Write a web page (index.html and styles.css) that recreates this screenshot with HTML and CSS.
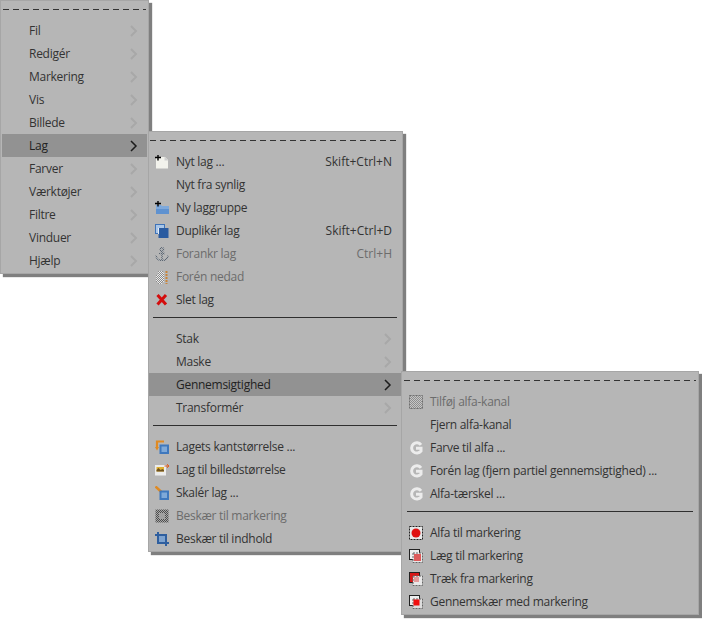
FILE: index.html
```html
<!DOCTYPE html>
<html lang="da">
<head>
<meta charset="utf-8">
<title>Lag-menu</title>
<link rel="stylesheet" href="styles.css">
</head>
<body>
<svg class="defs" width="0" height="0" aria-hidden="true">
  <defs>
    <pattern id="check" width="2" height="2" patternUnits="userSpaceOnUse"><rect width="2" height="2" fill="#ececec"/><rect width="1" height="1" fill="#8a8a8a"/><rect x="1" y="1" width="1" height="1" fill="#8a8a8a"/></pattern>
    <pattern id="checkmid" width="2" height="2" patternUnits="userSpaceOnUse"><rect width="2" height="2" fill="#c6c6c6"/><rect width="1" height="1" fill="#8e8e8e"/><rect x="1" y="1" width="1" height="1" fill="#8e8e8e"/></pattern>
    <pattern id="checkdark" width="2" height="2" patternUnits="userSpaceOnUse"><rect width="2" height="2" fill="#a8a8a8"/><rect width="1" height="1" fill="#4c4c4c"/><rect x="1" y="1" width="1" height="1" fill="#4c4c4c"/></pattern>
    <pattern id="checkblue" width="2" height="2" patternUnits="userSpaceOnUse"><rect width="2" height="2" fill="#a9aeb4"/><rect width="1" height="1" fill="#5d6670"/><rect x="1" y="1" width="1" height="1" fill="#5d6670"/></pattern>
  </defs>
</svg>
<div class="menu menu-main">
  <div class="tearoff"></div>
  <div class="item"><span class="icon"></span><span class="label">Fil</span><svg class="arrow" viewBox="0 0 8 12"><path d="M1 1l5 5-5 5"/></svg></div>
  <div class="item"><span class="icon"></span><span class="label">Redigér</span><svg class="arrow" viewBox="0 0 8 12"><path d="M1 1l5 5-5 5"/></svg></div>
  <div class="item"><span class="icon"></span><span class="label">Markering</span><svg class="arrow" viewBox="0 0 8 12"><path d="M1 1l5 5-5 5"/></svg></div>
  <div class="item"><span class="icon"></span><span class="label">Vis</span><svg class="arrow" viewBox="0 0 8 12"><path d="M1 1l5 5-5 5"/></svg></div>
  <div class="item"><span class="icon"></span><span class="label">Billede</span><svg class="arrow" viewBox="0 0 8 12"><path d="M1 1l5 5-5 5"/></svg></div>
  <div class="item active"><span class="icon"></span><span class="label">Lag</span><svg class="arrow" viewBox="0 0 8 12"><path d="M1 1l5 5-5 5"/></svg></div>
  <div class="item"><span class="icon"></span><span class="label">Farver</span><svg class="arrow" viewBox="0 0 8 12"><path d="M1 1l5 5-5 5"/></svg></div>
  <div class="item"><span class="icon"></span><span class="label">Værktøjer</span><svg class="arrow" viewBox="0 0 8 12"><path d="M1 1l5 5-5 5"/></svg></div>
  <div class="item"><span class="icon"></span><span class="label">Filtre</span><svg class="arrow" viewBox="0 0 8 12"><path d="M1 1l5 5-5 5"/></svg></div>
  <div class="item"><span class="icon"></span><span class="label">Vinduer</span><svg class="arrow" viewBox="0 0 8 12"><path d="M1 1l5 5-5 5"/></svg></div>
  <div class="item"><span class="icon"></span><span class="label">Hjælp</span><svg class="arrow" viewBox="0 0 8 12"><path d="M1 1l5 5-5 5"/></svg></div>
</div>

<div class="menu menu-layer">
  <div class="tearoff"></div>
  <div class="item"><svg class="icon" viewBox="0 0 14 14"><path d="M1 2h9l3 3v8.500H1z" fill="#f2f2ec"/><path d="M9.500 1.500l4 4h-4z" fill="#cfcfcf"/><path d="M0 2.500h6M3 0v5.500" stroke="#000" stroke-width="1.400" fill="none"/></svg><span class="label">Nyt lag ...</span><span class="accel">Skift+Ctrl+N</span></div>
  <div class="item"><span class="icon"></span><span class="label">Nyt fra synlig</span></div>
  <div class="item"><svg class="icon" viewBox="0 0 14 14"><path d="M1 4h5l1 1h7v8H1z" fill="#7ea9dc"/><path d="M1 8h13v5H1z" fill="#5f92d0"/><path d="M0 2.500h6M3 0v5.500" stroke="#000" stroke-width="1.400" fill="none"/></svg><span class="label">Ny laggruppe</span></div>
  <div class="item"><svg class="icon" viewBox="0 0 14 14"><rect x="0.500" y="0.500" width="9" height="9" fill="#a9c6e8" stroke="#3f73b8"/><rect x="3.500" y="4" width="10" height="10" fill="#2a5ba0"/><rect x="3" y="4" width="1" height="6" fill="#e4ecf6"/></svg><span class="label">Duplikér lag</span><span class="accel">Skift+Ctrl+D</span></div>
  <div class="item disabled"><svg class="icon" viewBox="0 0 14 14"><g fill="none" stroke="url(#checkblue)" stroke-width="1.500"><circle cx="7" cy="2.500" r="1.700"/><path d="M7 4v9.500M4 6.500h6M1 8.500c.5 3.500 3 5 6 5s5.500-1.500 6-5"/></g></svg><span class="label">Forankr lag</span><span class="accel">Ctrl+H</span></div>
  <div class="item disabled"><svg class="icon" viewBox="0 0 14 14"><path d="M3 1h5v2h1v9H7v2H3v-2H1V5h2z" fill="url(#check)"/><path d="M11.500 1v13" stroke="#c8843a" stroke-width="2" stroke-dasharray="2 1"/></svg><span class="label">Forén nedad</span></div>
  <div class="item"><svg class="icon" viewBox="0 0 14 14"><path d="M2.500 2l8.500 9.500M11 2l-8.500 9.500" stroke="#d40d0d" stroke-width="3" fill="none"/></svg><span class="label">Slet lag</span></div>
  <div class="sep"></div>
  <div class="item"><span class="icon"></span><span class="label">Stak</span><svg class="arrow" viewBox="0 0 8 12"><path d="M1 1l5 5-5 5"/></svg></div>
  <div class="item"><span class="icon"></span><span class="label">Maske</span><svg class="arrow" viewBox="0 0 8 12"><path d="M1 1l5 5-5 5"/></svg></div>
  <div class="item active"><span class="icon"></span><span class="label">Gennemsigtighed</span><svg class="arrow" viewBox="0 0 8 12"><path d="M1 1l5 5-5 5"/></svg></div>
  <div class="item"><span class="icon"></span><span class="label">Transformér</span><svg class="arrow" viewBox="0 0 8 12"><path d="M1 1l5 5-5 5"/></svg></div>
  <div class="sep"></div>
  <div class="item"><svg class="icon" viewBox="0 0 14 14"><path d="M2 8V1.500H9" fill="none" stroke="#e08a22" stroke-width="2.200"/><path d="M0 7h4L2 10.500z" fill="#e08a22"/><rect x="4.500" y="4.500" width="9.500" height="9.500" fill="#3f78bd"/><rect x="6.500" y="6.500" width="5.500" height="5.500" fill="#7fa9d8"/></svg><span class="label">Lagets kantstørrelse ...</span></div>
  <div class="item"><svg class="icon" viewBox="0 0 14 14"><rect x="0" y="2" width="11" height="10.500" fill="#ececec"/><rect x="1.500" y="4" width="7.500" height="4.500" fill="#e0b030"/><path d="M1.500 7l2-2 2 2 2-1 1.500 1v1.500H1.500z" fill="#6e5220"/><path d="M9.500 3h4M12 1.200L14 3l-2 1.800" stroke="#e05a1c" fill="none"/></svg><span class="label">Lag til billedstørrelse</span></div>
  <div class="item"><svg class="icon" viewBox="0 0 14 14"><path d="M.5 .5l7 6.500" stroke="#e08a22" stroke-width="2.500"/><rect x="4.500" y="4.500" width="9.500" height="9.500" fill="#3f78bd"/><rect x="6.500" y="6.500" width="5.500" height="5.500" fill="#7fa9d8"/></svg><span class="label">Skalér lag ...</span></div>
  <div class="item disabled"><svg class="icon" viewBox="0 0 14 14"><rect x="0.500" y="0.500" width="13" height="13" fill="url(#checkdark)"/><rect x="4" y="4" width="6" height="6" fill="#a0a0a0"/></svg><span class="label">Beskær til markering</span></div>
  <div class="item"><svg class="icon" viewBox="0 0 14 14"><rect x="3" y="3" width="8" height="8" fill="#7ea3cf"/><path d="M3 0v11h11M0 3h11v11" fill="none" stroke="#2f5f9f" stroke-width="2"/></svg><span class="label">Beskær til indhold</span></div>
</div>

<div class="menu menu-alpha">
  <div class="tearoff"></div>
  <div class="item disabled"><svg class="icon" viewBox="0 0 14 14"><rect x="0.500" y="0.500" width="13" height="13" fill="url(#checkmid)" stroke="#6f6f6f" stroke-dasharray="2 1"/></svg><span class="label">Tilføj alfa-kanal</span></div>
  <div class="item"><span class="icon"></span><span class="label">Fjern alfa-kanal</span></div>
  <div class="item"><svg class="icon" viewBox="0 0 14 14"><path class="g" d="M12 3.800A5.200 5.200 0 1 0 12 10V7.300H7"/></svg><span class="label">Farve til alfa ...</span></div>
  <div class="item"><svg class="icon" viewBox="0 0 14 14"><path class="g" d="M12 3.800A5.200 5.200 0 1 0 12 10V7.300H7"/></svg><span class="label">Forén lag (fjern partiel gennemsigtighed) ...</span></div>
  <div class="item"><svg class="icon" viewBox="0 0 14 14"><path class="g" d="M12 3.800A5.200 5.200 0 1 0 12 10V7.300H7"/></svg><span class="label">Alfa-tærskel ...</span></div>
  <div class="sep"></div>
  <div class="item"><svg class="icon" viewBox="0 0 14 14"><rect x="0.500" y="0.500" width="13" height="13" fill="#e8e8e8" stroke="#222" stroke-dasharray="2 1"/><circle cx="7" cy="7" r="4.500" fill="#e01010"/></svg><span class="label">Alfa til markering</span></div>
  <div class="item"><svg class="icon" viewBox="0 0 14 14"><rect x="0.500" y="0.500" width="10" height="10" fill="#eee" stroke="#222"/><rect x="4" y="4" width="9.500" height="9.500" fill="#e8e8e8" stroke="#666" stroke-dasharray="2 1"/><rect x="5" y="5" width="7" height="7" fill="#dd5a5a"/></svg><span class="label">Læg til markering</span></div>
  <div class="item"><svg class="icon" viewBox="0 0 14 14"><rect x="0.500" y="0.500" width="10" height="10" fill="#d81818" stroke="#222"/><rect x="4" y="4" width="9.500" height="9.500" fill="#e8e8e8" stroke="#666" stroke-dasharray="2 1"/><rect x="5" y="5" width="5" height="5" fill="#e29a9a"/></svg><span class="label">Træk fra markering</span></div>
  <div class="item"><svg class="icon" viewBox="0 0 14 14"><rect x="0.500" y="0.500" width="10" height="10" fill="#eee" stroke="#222"/><rect x="4" y="4" width="9.500" height="9.500" fill="#ddd" stroke="#666" stroke-dasharray="2 1"/><rect x="4.500" y="4.500" width="6" height="6" fill="#f01010"/></svg><span class="label">Gennemskær med markering</span></div>
</div>
</body>
</html>
```
FILE: styles.css
```css
html, body {
  margin: 0;
  height: 100%;
  background: #fff;
  overflow: hidden;
}

.defs {
  position: absolute;
}

.menu {
  position: absolute;
  box-sizing: border-box;
  padding: 0 1px 1px;
  background: #b6b6b6;
  border: 1px solid #a6a6a6;
  box-shadow: 3px 3px 1px #7f7f7f;
  font: 12px/23px "Open Sans", sans-serif;
  color: #333;
}

.menu-main { left: 0; top: 0; width: 149px; height: 274px; }
.menu-layer { left: 148px; top: 131px; width: 255px; height: 421px; padding-left: 0; }
.menu-alpha { left: 401px; top: 371px; width: 298px; height: 244px; }

.tearoff {
  height: 18px;
  box-sizing: border-box;
  margin: 0 1px;
  padding-top: 8px;
}

.tearoff::before {
  content: "";
  display: block;
  height: 1px;
  background: repeating-linear-gradient(to right, #333 0 6px, transparent 6px 10px);
}

.item {
  display: flex;
  align-items: center;
  height: 23px;
  padding: 0 9px 0 5px;
  white-space: nowrap;
}

.menu-layer .item { padding-left: 6px; }
.menu-main .item { padding-left: 1px; }

.icon {
  flex: none;
  width: 14px;
  height: 14px;
  margin-right: 7px;
}

.menu-main .icon { width: 26px; margin-right: 0; }

.menu-alpha .icon { margin-left: 1px; }

.label { flex: 1; letter-spacing: -0.27px; }

.arrow {
  flex: none;
  width: 8px;
  height: 12px;
  fill: none;
  stroke: #a8a8a8;
  stroke-width: 2;
}

.active { background: #929292; color: #222; }
.active .arrow { stroke: #1c1c1c; stroke-width: 1.500; }

.disabled { color: #6c6c6c; }

.sep {
  height: 1px;
  margin: 6px 4px 9px;
  background: #2f2f2f;
}

.g {
  fill: none;
  stroke: #ececec;
  stroke-width: 3;
}
```
